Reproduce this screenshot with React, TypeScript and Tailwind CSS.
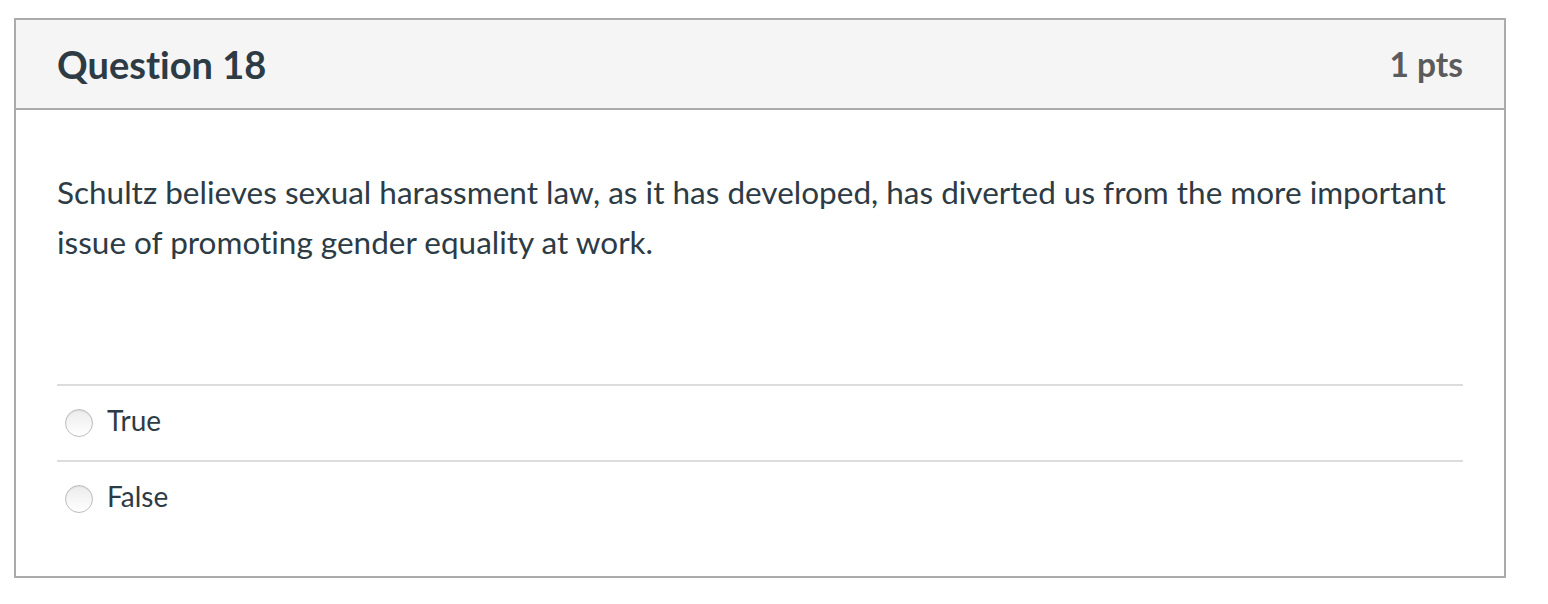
const answers = ["True", "False"];

const Radio = () => (
  <span className="inline-block size-[28px] shrink-0 rounded-full border border-[#bdbdbd] bg-gradient-to-b from-[#ececec] to-white shadow-[inset_0_1px_1px_rgba(0,0,0,0.08)]" />
);

export default function App() {
  return (
    <div className="min-h-screen bg-white pt-[18px] pl-[14px] font-['Lato','Noto_Sans',sans-serif] text-[#2d3b45] [font-variant-ligatures:none]">
      <div className="w-[1492px] border-2 border-[#ababab]">
        <div className="flex h-[90px] items-center justify-between border-b-2 border-[#ababab] bg-[#f5f5f5] px-[41px]">
          <h2 className="text-[38px] font-bold leading-none">Question 18</h2>
          <span className="mt-[2px] text-[33.5px] font-bold leading-none text-[#5b5b5b]">1 pts</span>
        </div>
        <div className="px-[41px] pt-[57px] pb-[40px]">
          <p className="text-[31.5px] leading-[50px]">
            Schultz believes sexual harassment law, as it has developed, has diverted us from the more
            important issue of promoting gender equality at work.
          </p>
          <div className="mt-[117px]">
            {answers.map((a) => (
              <div key={a} className="flex h-[76px] items-center gap-[14px] border-t-2 border-[#dcdcdc] pl-[8px]">
                <Radio />
                <span className="pb-[7px] text-[28px] leading-none">{a}</span>
              </div>
            ))}
          </div>
        </div>
      </div>
    </div>
  );
}
